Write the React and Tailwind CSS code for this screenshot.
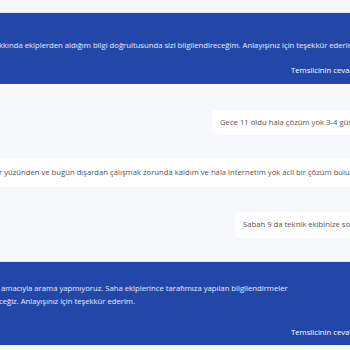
export default function App() {
  const font = { fontFamily: '"Open Sans", "Noto Sans", sans-serif' };
  return (
    <div
      className="w-[350px] h-[350px] overflow-hidden bg-[#f7f8fb] text-[7.7px]"
      style={font}
    >
      <div className="h-[12px]" />

      <div className="h-[72px] bg-[#2347a9] border-t border-[#dfe8f7] text-white flex flex-col">
        <p className="whitespace-nowrap mt-[26px] ml-[-1px] leading-[12px] text-white/90">
          kkında ekiplerden aldığım bilgi doğrultusunda sizi bilgilendireceğim. Anlayışınız için teşekkür ederim.
        </p>
        <p className="whitespace-nowrap mt-[13px] ml-[291px] leading-[12px]">
          Temsilcinin cevabı
        </p>
      </div>

      <div className="h-[26px]" />

      <div className="ml-[212px] w-[200px] h-[25px] bg-white rounded-l-sm flex items-center pl-[8px] text-[#555]">
        <span className="whitespace-nowrap">Gece 11 oldu hala çözüm yok 3-4 gün</span>
      </div>

      <div className="h-[23px]" />

      <div className="h-[29px] bg-white flex items-center text-[#555]">
        <span className="whitespace-nowrap ml-[-1px]">
          r yüzünden ve bugün dışardan çalışmak zorunda kaldım ve hala internetim yok acil bir çözüm bulun
        </span>
      </div>

      <div className="h-[25px]" />

      <div className="ml-[235px] w-[200px] h-[26px] bg-white rounded-l-sm flex items-center pl-[8px] text-[#555]">
        <span className="whitespace-nowrap">Sabah 9 da teknik ekibinize sorun</span>
      </div>

      <div className="h-[23px]" />

      <div className="h-[84px] bg-[#2347a9] border-t border-[#dfe8f7] text-white flex flex-col">
        <p className="whitespace-nowrap mt-[20px] ml-[1px] leading-[13px] text-white/90">
          amacıyla arama yapmıyoruz. Saha ekiplerince tarafımıza yapılan bilgilendirmeler
        </p>
        <p className="whitespace-nowrap ml-[-1px] leading-[13px] text-white/90">
          ceğiz. Anlayışınız için teşekkür ederim.
        </p>
        <p className="whitespace-nowrap mt-[18px] ml-[291px] leading-[12px]">
          Temsilcinin cevabı
        </p>
      </div>
    </div>
  );
}
